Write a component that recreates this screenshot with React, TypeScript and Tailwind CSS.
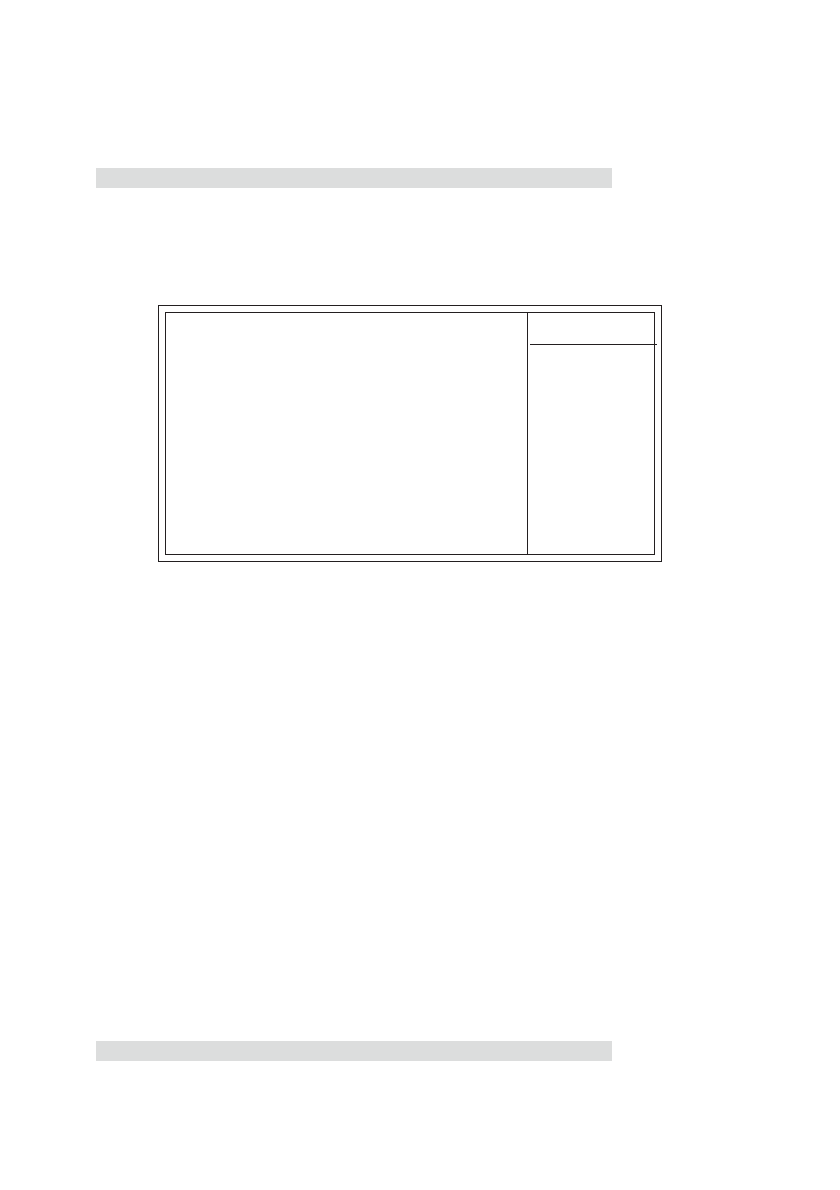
import React from 'react';

// Grey strip at the top and bottom of the page
const PageBar: React.FC = () => <div className="mr-[228px] ml-24 h-5 bg-[#dcdddd]" />;

// Double-framed setup screen: main area on the left, help column on the right
const SetupScreen: React.FC = () => (
  <section className="mr-[178px] ml-[158px] border border-[#231f20] p-[6px]">
    <div className="flex min-h-[243px] border border-[#231f20]">
      <div className="flex-1" />
      <aside className="w-[127px] border-l border-[#231f20]">
        {/* The rule runs slightly past the inner frame */}
        <div className="-mr-[3px] ml-[2px] h-8 border-b border-[#231f20]" />
      </aside>
    </div>
  </section>
);

export default function App() {
  return (
    <div className="flex min-h-screen flex-col bg-white pt-[168px] pb-[129px]">
      <header>
        <PageBar />
      </header>
      <main className="flex-1 pt-[117px]">
        <SetupScreen />
      </main>
      <footer>
        <PageBar />
      </footer>
    </div>
  );
}
